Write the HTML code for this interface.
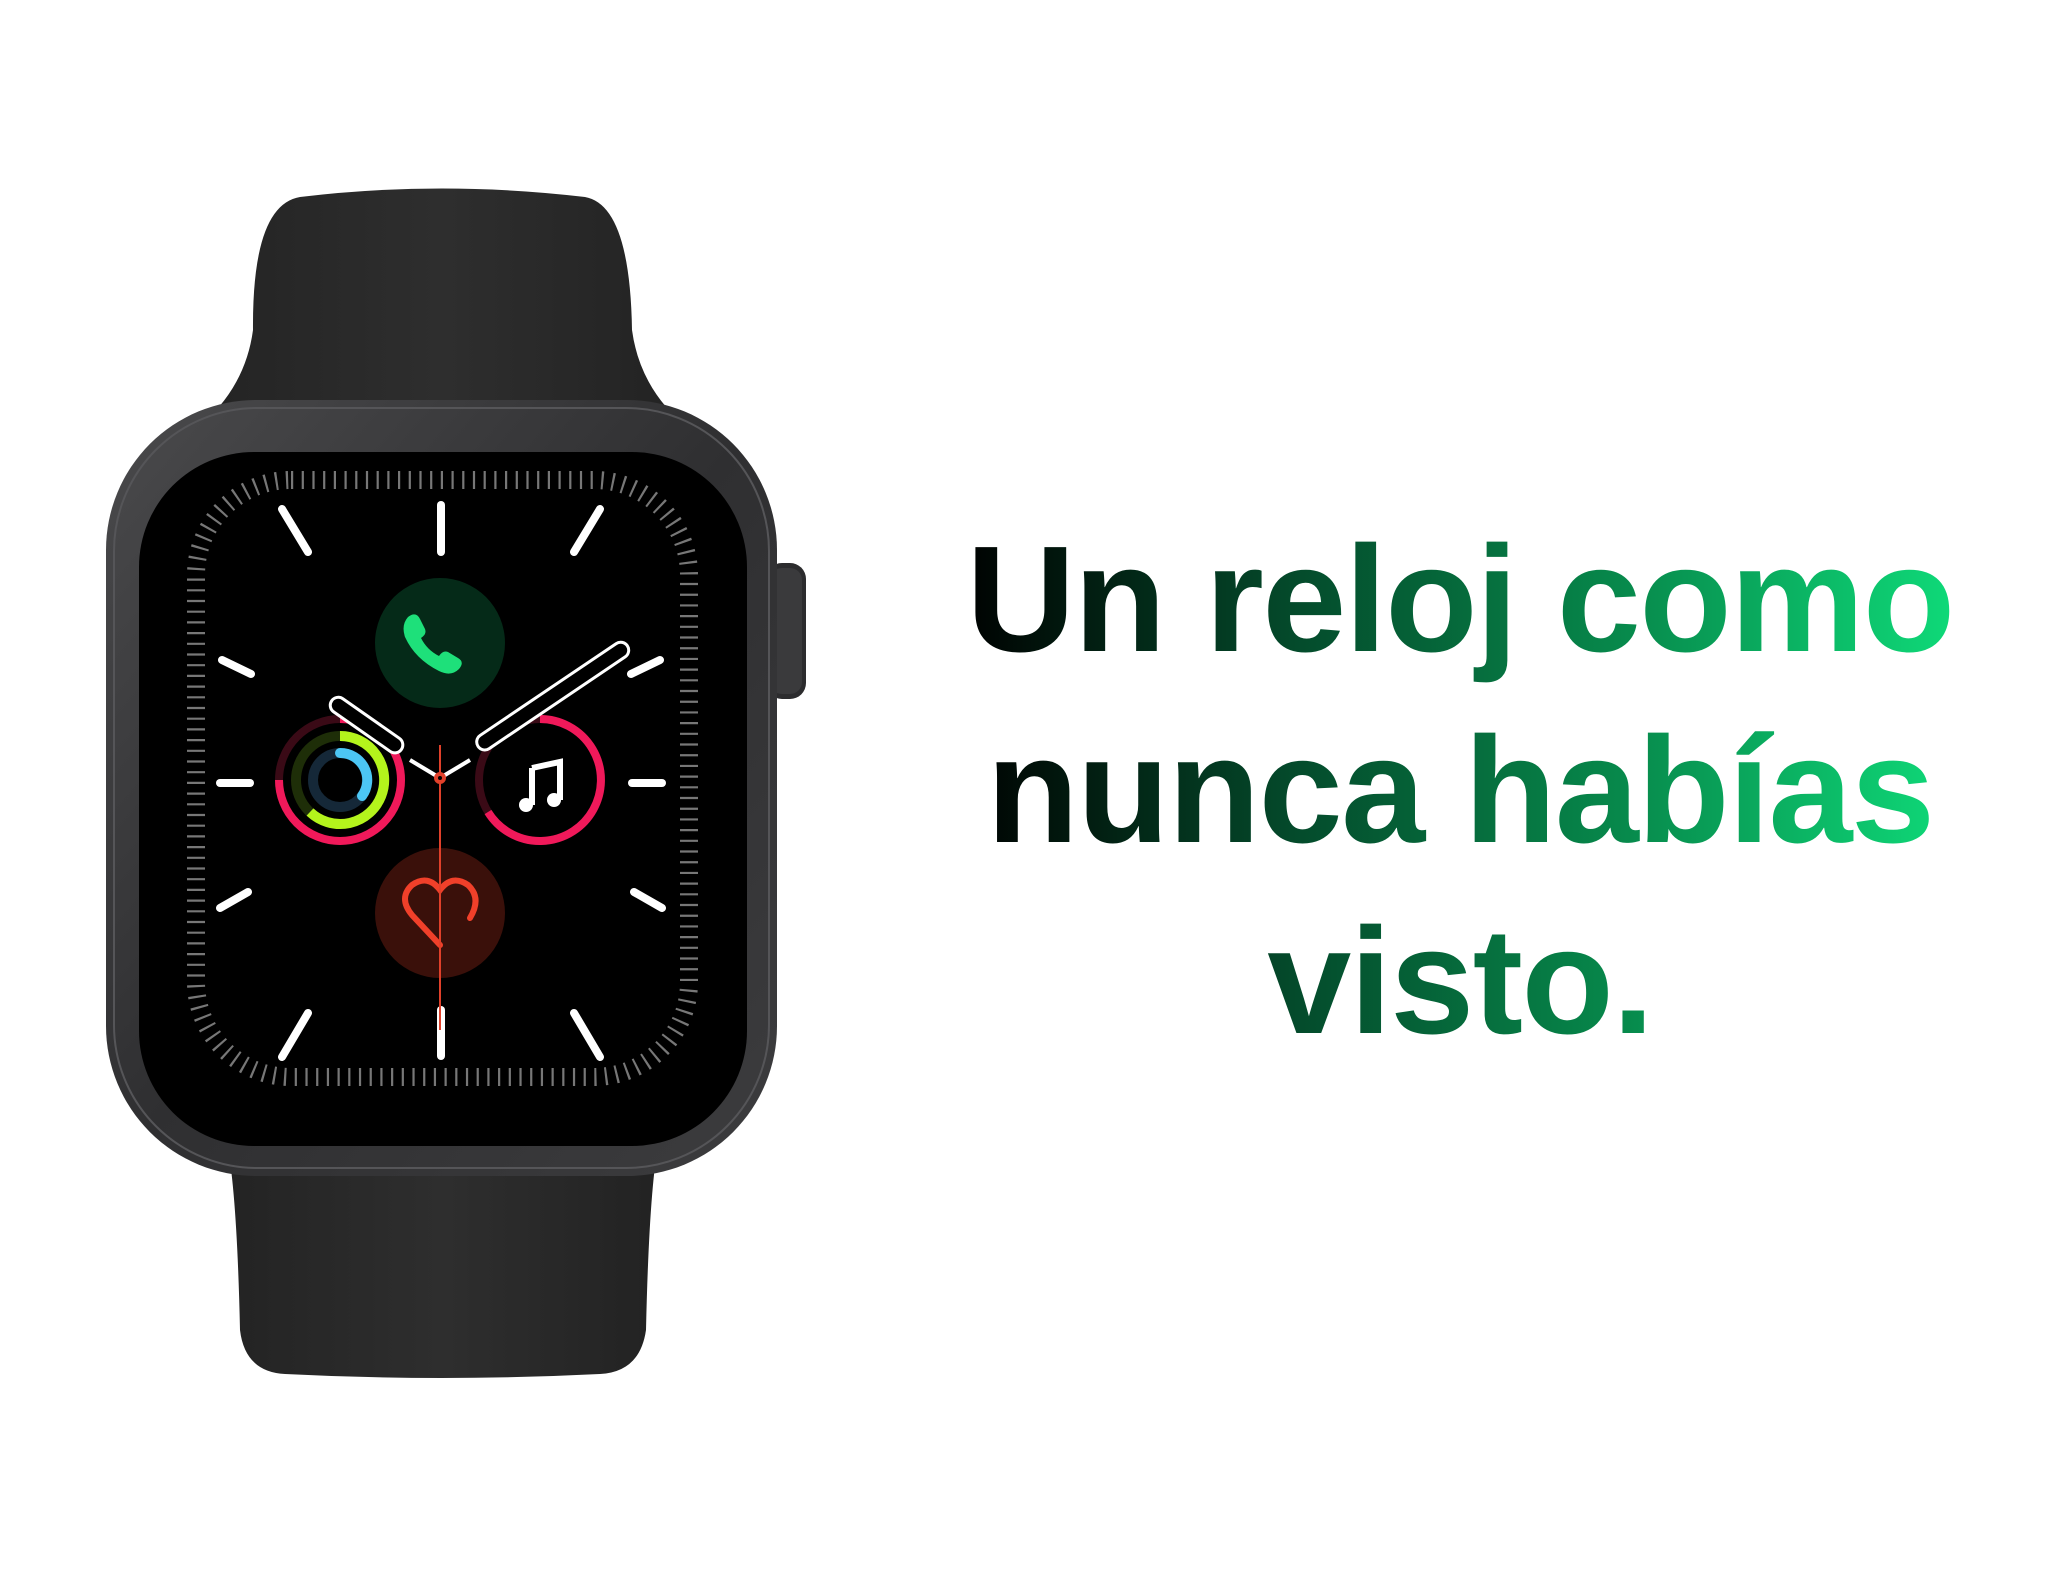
<!DOCTYPE html>
<html><head><meta charset="utf-8"><style>
html,body{margin:0;padding:0;background:#fff;width:2048px;height:1578px;overflow:hidden}
.t{position:absolute;left:900px;top:503px;width:1120px;text-align:center;font-family:"Liberation Sans",sans-serif;font-weight:bold;font-size:151px;line-height:191px;letter-spacing:-1.5px;
background:linear-gradient(90deg,#000 5%,#044a2b 35%,#078a4c 65%,#0fdc7a 95%);-webkit-background-clip:text;background-clip:text;color:transparent}
</style></head><body>
<svg width="2048" height="1578" style="position:absolute;left:0;top:0">
<defs>
<linearGradient id="band" x1="0" x2="1"><stop offset="0" stop-color="#232323"/><stop offset=".5" stop-color="#2e2e2e"/><stop offset="1" stop-color="#222"/></linearGradient>
<linearGradient id="case" x1="0" y1="0" x2="1" y2="1"><stop offset="0" stop-color="#4a4a4c"/><stop offset=".5" stop-color="#2f2f31"/><stop offset="1" stop-color="#3c3c3e"/></linearGradient>
</defs>
<path d="M253 330 Q252 205 300 197 Q441 180 585 197 Q630 205 632 330 Q640 390 690 430 L195 430 Q245 390 253 330 Z" fill="url(#band)"/>
<path d="M220 1120 L665 1120 Q650 1150 646 1330 Q640 1372 600 1374 Q441 1382 285 1374 Q245 1372 240 1330 Q236 1150 220 1120 Z" fill="url(#band)"/>
<rect x="766" y="563" width="40" height="136" rx="16" fill="#2c2c2e"/>
<rect x="770" y="568" width="32" height="126" rx="12" fill="#3a3a3c"/>
<rect x="106" y="400" width="671" height="776" rx="150" fill="url(#case)"/>
<rect x="114" y="408" width="655" height="760" rx="143" fill="none" stroke="#555558" stroke-width="2"/>
<rect x="139" y="452" width="608" height="694" rx="115" fill="#000"/>
<rect x="196" y="480" width="493" height="597" rx="95" fill="none" stroke="#777" stroke-width="18" stroke-dasharray="2.2 8.5"/>
<g stroke="#fff" stroke-width="8" stroke-linecap="round">
<line x1="441" y1="505" x2="441" y2="552"/><line x1="600" y1="509" x2="574" y2="552"/><line x1="660" y1="660" x2="631" y2="674"/>
<line x1="632" y1="783" x2="662" y2="783"/><line x1="634" y1="892" x2="662" y2="908"/><line x1="574" y1="1013" x2="600" y2="1057"/>
<line x1="441" y1="1010" x2="441" y2="1056"/><line x1="282" y1="509" x2="308" y2="552"/><line x1="222" y1="660" x2="251" y2="674"/>
<line x1="220" y1="783" x2="250" y2="783"/><line x1="220" y1="908" x2="248" y2="892"/><line x1="282" y1="1057" x2="308" y2="1013"/>
</g>
<circle cx="440" cy="643" r="65" fill="#052a18"/>
<path d="M408 617 q8 -6 12 2 l5 10 q2 5 -4 9 q6 12 18 18 q4 -6 9 -4 l10 6 q7 4 1 11 q-8 8 -20 2 q-24 -12 -34 -34 q-4 -12 3 -20z" fill="#1ee07a"/>
<circle cx="440" cy="913" r="65" fill="#3a100a"/>
<path d="M440 945 L412 915 Q398 898 412 885 Q428 874 440 890 Q452 874 468 885 Q482 898 470 918" fill="none" stroke="#f0402a" stroke-width="6" stroke-linecap="round"/>
<circle cx="340" cy="780" r="61" fill="none" stroke="#3a0a16" stroke-width="8"/>
<path d="M340 719 A61 61 0 1 1 279 780" fill="none" stroke="#f0195a" stroke-width="8"/>
<circle cx="340" cy="780" r="44" fill="none" stroke="#1e2e08" stroke-width="10"/>
<path d="M340 736 A44 44 0 1 1 310 812" fill="none" stroke="#b4f41c" stroke-width="10"/>
<circle cx="340" cy="780" r="27" fill="none" stroke="#152838" stroke-width="10"/>
<path d="M340 753 A27 27 0 0 1 362 796" fill="none" stroke="#4cc6f4" stroke-width="10" stroke-linecap="round"/>
<circle cx="540" cy="780" r="61" fill="none" stroke="#3a0a16" stroke-width="8"/>
<path d="M540 719 A61 61 0 1 1 488 812" fill="none" stroke="#f0195a" stroke-width="8"/>
<path d="M532 768 L560 762 L560 800" fill="none" stroke="#fff" stroke-width="6"/>
<line x1="532" y1="768" x2="532" y2="805" stroke="#fff" stroke-width="6"/>
<circle cx="526" cy="805" r="7" fill="#fff"/><circle cx="554" cy="800" r="7" fill="#fff"/>
<line x1="440" y1="745" x2="440" y2="1030" stroke="#e0402a" stroke-width="2"/>
<g stroke="#fff" stroke-width="3" fill="#000">
<line x1="440" y1="778" x2="410" y2="760" stroke-width="4"/>
<line x1="440" y1="778" x2="470" y2="760" stroke-width="4"/>
<rect x="-4" y="-8" width="85" height="16" rx="8" transform="translate(335,703) rotate(35)"/>
<rect x="-4" y="-8" width="180" height="16" rx="8" transform="translate(624,648) rotate(146)"/>
</g>
<circle cx="440" cy="778" r="6" fill="#e0402a"/><circle cx="440" cy="778" r="2" fill="#000"/>
</svg>
<div class="t">Un reloj como<br>nunca habías<br>visto.</div>
</body></html>
